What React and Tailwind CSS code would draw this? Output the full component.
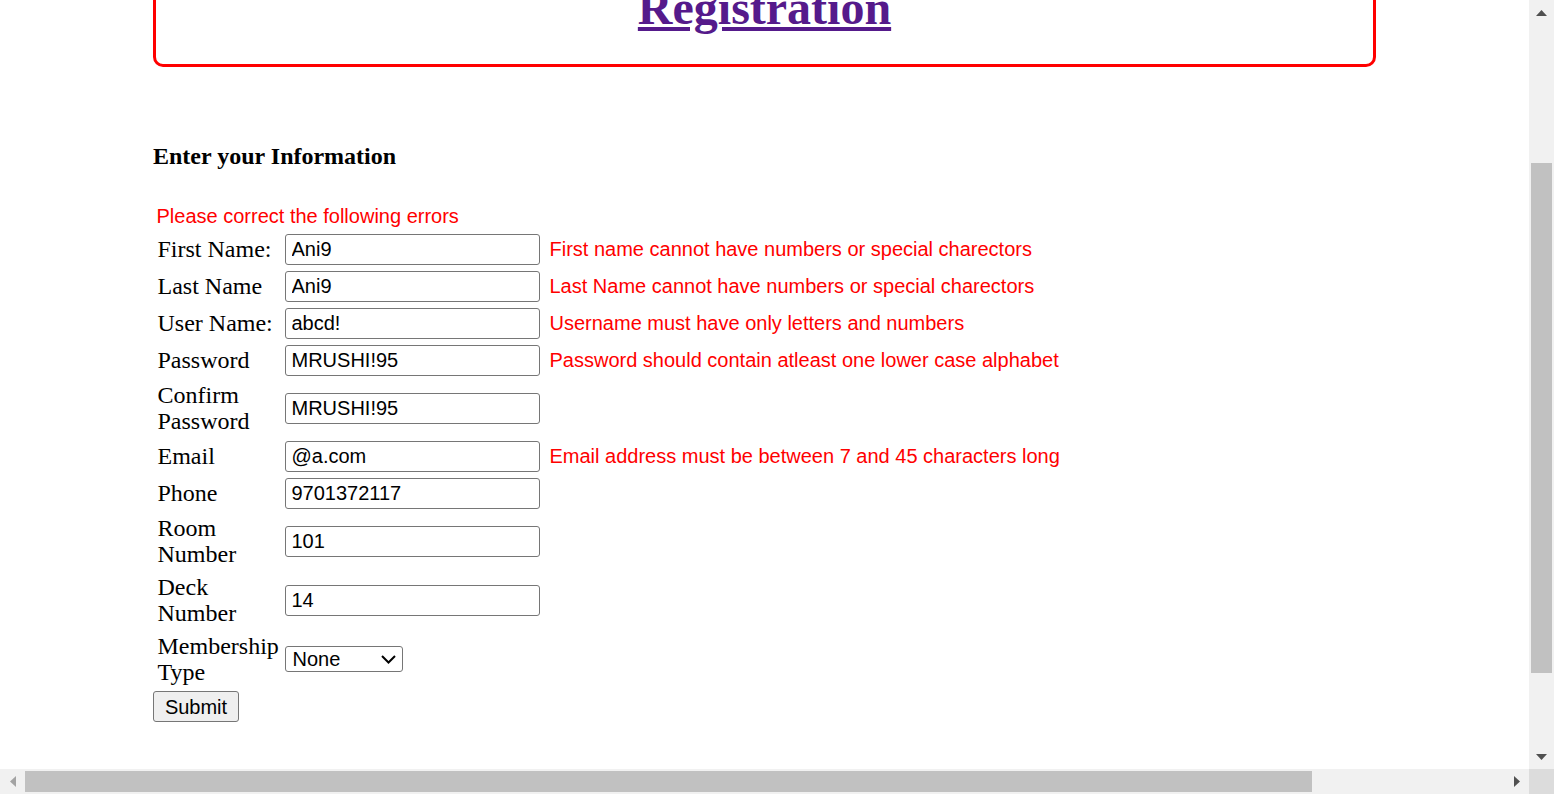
import React from "react";

const serif = { fontFamily: '"Liberation Serif", "Times New Roman", serif' };
const sans = { fontFamily: '"Liberation Sans", Arial, sans-serif' };

const rows = [
  { label: "First Name:", value: "Ani9", error: "First name cannot have numbers or special charectors" },
  { label: "Last Name", value: "Ani9", error: "Last Name cannot have numbers or special charectors" },
  { label: "User Name:", value: "abcd!", error: "Username must have only letters and numbers" },
  { label: "Password", value: "MRUSHI!95", error: "Password should contain atleast one lower case alphabet" },
  { label: "Confirm Password", value: "MRUSHI!95" },
  { label: "Email", value: "@a.com", error: "Email address must be between 7 and 45 characters long" },
  { label: "Phone", value: "9701372117" },
  { label: "Room Number", value: "101" },
  { label: "Deck Number", value: "14" },
];

function Tri({ dir }) {
  if (dir === "up")
    return (
      <svg width="11" height="6" viewBox="0 0 11 6">
        <polygon points="0,6 5.5,0 11,6" fill="#505050" />
      </svg>
    );
  if (dir === "down")
    return (
      <svg width="11" height="6" viewBox="0 0 11 6">
        <polygon points="0,0 11,0 5.5,6" fill="#505050" />
      </svg>
    );
  if (dir === "left")
    return (
      <svg width="6" height="11" viewBox="0 0 6 11">
        <polygon points="6,0 6,11 0,5.5" fill="#a3a3a3" />
      </svg>
    );
  return (
    <svg width="6" height="11" viewBox="0 0 6 11">
      <polygon points="0,0 6,5.5 0,11" fill="#505050" />
    </svg>
  );
}

export default function App() {
  return (
    <div className="w-[1554px] h-[794px] flex flex-col overflow-hidden bg-white">
      <div className="flex h-[769px]">
        <div className="w-[1529px] h-[769px] overflow-hidden">
          <div className="flex flex-col items-start pl-[153px] text-black" style={serif}>
            <div className="w-[1223px] h-[150px] -mt-[83px] shrink-0 border-[3px] border-[#ff0000] rounded-[10px] flex flex-col justify-end items-center pb-[29px]">
              <h1 className="text-[48px] font-bold leading-[55px]">
                <a className="underline text-[#551a8b]" href="#">
                  Registration
                </a>
              </h1>
            </div>
            <div className="mt-[76px] text-[24px] font-bold leading-[27px]">Enter your Information</div>
            <table className="mt-[30px] border-separate border-spacing-[3px]">
              <tbody>
                <tr>
                  <td colSpan={3} className="p-[1.5px] align-middle">
                    <div className="-ml-px text-[20px] leading-[23px] text-[#ff0000]" style={sans}>
                      Please correct the following errors
                    </div>
                  </td>
                </tr>
                {rows.map((r) => (
                  <tr key={r.label}>
                    <td className="p-[1.5px] align-middle">
                      <div className="w-[121px] text-[24px] leading-[26.5px]">{r.label}</div>
                    </td>
                    <td className="p-[1.5px] align-middle">
                      <input
                        type="text"
                        readOnly
                        defaultValue={r.value}
                        className="block w-[255px] h-[31px] border border-[#767676] rounded-[3px] px-[6px] text-[20px] text-black bg-white outline-none"
                        style={sans}
                      />
                    </td>
                    <td className="p-[1.5px] align-middle">
                      {r.error ? (
                        <div className="pl-[4px] text-[20px] leading-[23px] text-[#ff0000] whitespace-nowrap" style={sans}>
                          {r.error}
                        </div>
                      ) : null}
                    </td>
                  </tr>
                ))}
                <tr>
                  <td className="p-[1.5px] align-middle">
                    <div className="w-[121px] text-[24px] leading-[26.5px] whitespace-pre-line">{"Membership\nType"}</div>
                  </td>
                  <td className="p-[1.5px] align-middle">
                    <div
                      className="w-[118px] h-[26px] border border-[#767676] rounded-[3px] flex items-center justify-between pl-[7px] pr-[6px] text-[20px] bg-white"
                      style={sans}
                    >
                      <span>None</span>
                      <svg width="15" height="9" viewBox="0 0 15 9">
                        <polyline points="1,1 7.5,7.5 14,1" fill="none" stroke="#000" strokeWidth="2" />
                      </svg>
                    </div>
                  </td>
                  <td className="p-[1.5px]"></td>
                </tr>
              </tbody>
            </table>
            <div className="mt-px">
              <button
                type="button"
                className="w-[86px] h-[31px] border border-[#767676] rounded-[3px] bg-[#efefef] text-[20px] text-black"
                style={sans}
              >
                Submit
              </button>
            </div>
          </div>
        </div>
        <div className="w-[25px] h-[769px] bg-[#f1f1f1] flex flex-col items-center">
          <div className="h-[25px] w-full flex items-center justify-center">
            <Tri dir="up" />
          </div>
          <div className="h-[138px] shrink-0" />
          <div className="w-[21px] h-[510px] bg-[#c1c1c1] shrink-0" />
          <div className="flex-1" />
          <div className="h-[25px] w-full flex items-center justify-center">
            <Tri dir="down" />
          </div>
        </div>
      </div>
      <div className="h-[25px] flex bg-[#f1f1f1]">
        <div className="w-[25px] h-full flex items-center justify-center">
          <Tri dir="left" />
        </div>
        <div className="flex-1 flex items-center">
          <div className="w-[1287px] h-[21px] bg-[#c1c1c1]" />
        </div>
        <div className="w-[25px] h-full flex items-center justify-center">
          <Tri dir="right" />
        </div>
        <div className="w-[25px] h-full bg-[#dcdcdc]" />
      </div>
    </div>
  );
}
